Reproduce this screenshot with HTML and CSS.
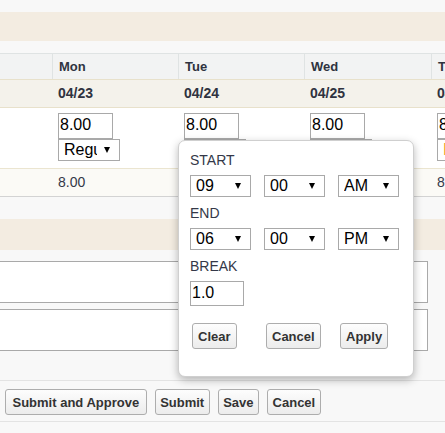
FILE: index.html
```html
<!DOCTYPE html>
<html>
<head>
<meta charset="utf-8">
<title>Timesheet</title>
<link rel="stylesheet" href="styles.css">
</head>
<body>
<div class="page">
  <div class="gap-top"></div>
  <div class="band"></div>
  <div class="gap-mid"></div>

  <div class="grid">
    <div class="row hdr">
      <div class="cell first"></div>
      <div class="cell">Mon</div>
      <div class="cell">Tue</div>
      <div class="cell w127">Wed</div>
      <div class="cell">Thu</div>
    </div>
    <div class="row dates">
      <div class="cell first"></div>
      <div class="cell">04/23</div>
      <div class="cell">04/24</div>
      <div class="cell w127">04/25</div>
      <div class="cell">04/26</div>
    </div>
    <div class="row entry">
      <div class="cell first"></div>
      <div class="cell"><input class="hrs" value="8.00"><div class="sel type"><span class="val">Regular</span><i class="arr"></i></div></div>
      <div class="cell"><input class="hrs" value="8.00"><div class="sel type"><span class="val">Regular</span><i class="arr"></i></div></div>
      <div class="cell w127"><input class="hrs" value="8.00"><div class="sel type"><span class="val">Regular</span><i class="arr"></i></div></div>
      <div class="cell"><input class="hrs" value="8.00"><div class="sel type"><span class="val pto">PTO</span><i class="arr"></i></div></div>
    </div>
    <div class="row total">
      <div class="cell first"></div>
      <div class="cell">8.00</div>
      <div class="cell">8.00</div>
      <div class="cell w127">8.00</div>
      <div class="cell">8.00</div>
    </div>
  </div>

  <div class="gap-a"></div>
  <div class="band band2"></div>
  <div class="gap-b"></div>
  <textarea class="note"></textarea>
  <div class="gap-c"></div>
  <textarea class="note"></textarea>
  <div class="gap-d"></div>

  <div class="footer">
    <button class="btn wide">Submit and Approve</button>
    <button class="btn">Submit</button>
    <button class="btn">Save</button>
    <button class="btn">Cancel</button>
  </div>

  <div class="popup">
    <div class="lbl">START</div>
    <div class="trio">
      <div class="sel"><span class="val">09</span><i class="arr"></i></div>
      <div class="sel"><span class="val">00</span><i class="arr"></i></div>
      <div class="sel"><span class="val">AM</span><i class="arr"></i></div>
    </div>
    <div class="lbl l2">END</div>
    <div class="trio">
      <div class="sel"><span class="val">06</span><i class="arr"></i></div>
      <div class="sel"><span class="val">00</span><i class="arr"></i></div>
      <div class="sel"><span class="val">PM</span><i class="arr"></i></div>
    </div>
    <div class="lbl l2">BREAK</div>
    <input class="brk" value="1.0">
    <div class="trio actions">
      <button class="btn">Clear</button>
      <button class="btn">Cancel</button>
      <button class="btn">Apply</button>
    </div>
  </div>
</div>
</body>
</html>
```

FILE: styles.css
```css
* { box-sizing: border-box; }
html, body { margin: 0; padding: 0; }
body {
  background: #f8f8f8;
  font-family: "Liberation Sans", Arial, sans-serif;
  color: #333;
  overflow: hidden;
  width: 445px;
  height: 433px;
}
.page { position: relative; width: 445px; height: 433px; overflow: hidden; }

.gap-top { height: 12px; }
.band { height: 29px; background: #f3ece1; }
.gap-mid { height: 12px; }

.grid { width: 560px; }
.row { display: flex; }
.cell { width: 126px; flex: none; padding-left: 6px; white-space: nowrap; }
.cell.w127 { width: 127px; }
.cell.first { width: 52px; padding: 0; }

.hdr {
  height: 26px;
  border-top: 1px solid #dfe3e3;
  background: #f2f3f3;
  font-weight: bold;
  font-size: 13px;
  color: #2f3340;
}
.hdr .cell { border-left: 1px solid #dfe3e3; line-height: 25px; }
.hdr .cell.first { border-left: 0; }

.dates {
  height: 28px;
  border-top: 1px solid #e8e1cb;
  background: #f4f2eb;
  font-weight: bold;
  font-size: 14px;
  color: #2f3340;
}
.dates .cell { line-height: 27px; }

.entry {
  height: 61px;
  border-top: 1px solid #e8e1cb;
  background: #fff;
}
.entry .cell { padding-top: 5px; display: flex; flex-direction: column; align-items: flex-start; }

.hrs, .brk {
  width: 55px;
  height: 26px;
  border: 1px solid #a9a9a9;
  padding: 0 1px 2px;
  font: 16px "Liberation Sans", Arial, sans-serif;
  color: #000;
  background: #fff;
  margin: 0;
  border-radius: 0;
}

.sel {
  width: 61px;
  height: 22px;
  border: 1px solid #a9a9a9;
  background: #fff;
  display: flex;
  align-items: center;
  padding: 0 9px 0 5px;
  font-size: 16px;
  color: #000;
}
.sel .val { flex: 1; overflow: hidden; white-space: nowrap; }
.sel.type { width: 62px; }
.sel.type .val { flex: none; width: 33px; margin-right: auto; }
.sel .val.pto { color: #f0a030; }
.arr {
  flex: none;
  width: 0;
  height: 0;
  border-left: 3px solid transparent;
  border-right: 3px solid transparent;
  border-top: 6px solid #000;
}

.total {
  height: 29px;
  border-top: 1px solid #ebe5d0;
  border-bottom: 1px solid #d3d3d3;
  background: #fbfaf6;
  font-size: 14px;
  color: #343848;
}
.total .cell { line-height: 27px; }

.gap-a { height: 22px; }
.band2 { height: 31px; }
.gap-b { height: 11px; }
.note {
  display: block;
  width: 430px;
  height: 42px;
  margin: 0 0 0 -2px;
  border: 1px solid #a9a9a9;
  background: #fff;
  resize: none;
  border-radius: 0;
  padding: 0;
}
.gap-c { height: 6px; }
.gap-d { height: 29px; }

.footer {
  border-top: 1px solid #e3e3e3;
  border-bottom: 1px solid #e3e3e3;
  padding: 8px 0 6px 5px;
  display: flex;
  gap: 8px;
  height: 42px;
}

.btn {
  height: 26px;
  padding: 0 4.5px;
  margin: 0;
  font: bold 13px "Liberation Sans", Arial, sans-serif;
  color: #333;
  background: linear-gradient(#fdfdfd, #ececec);
  border: 1px solid #adadad;
  border-radius: 3px;
}
.btn.wide { padding: 0 6.5px; }

.popup {
  position: absolute;
  left: 178px;
  top: 140px;
  width: 236px;
  height: 237px;
  background: #fff;
  border: 1px solid #cfcfcf;
  border-radius: 7px;
  box-shadow: 0 3px 8px rgba(0, 0, 0, 0.28);
  padding: 11px 11px 0 11px;
  display: flex;
  flex-direction: column;
  align-items: flex-start;
}
.lbl { font-size: 14px; line-height: 16px; color: #343848; margin-bottom: 7px; }
.lbl.l2 { margin-top: 8px; }
.trio { display: grid; grid-template-columns: 61px 61px 61px; column-gap: 13px; }
.brk { width: 54px; height: 25px; }
.actions { margin-top: 17px; }
.actions .btn { justify-self: start; margin-left: 2px; height: 26px; padding: 0 5px; }
```
